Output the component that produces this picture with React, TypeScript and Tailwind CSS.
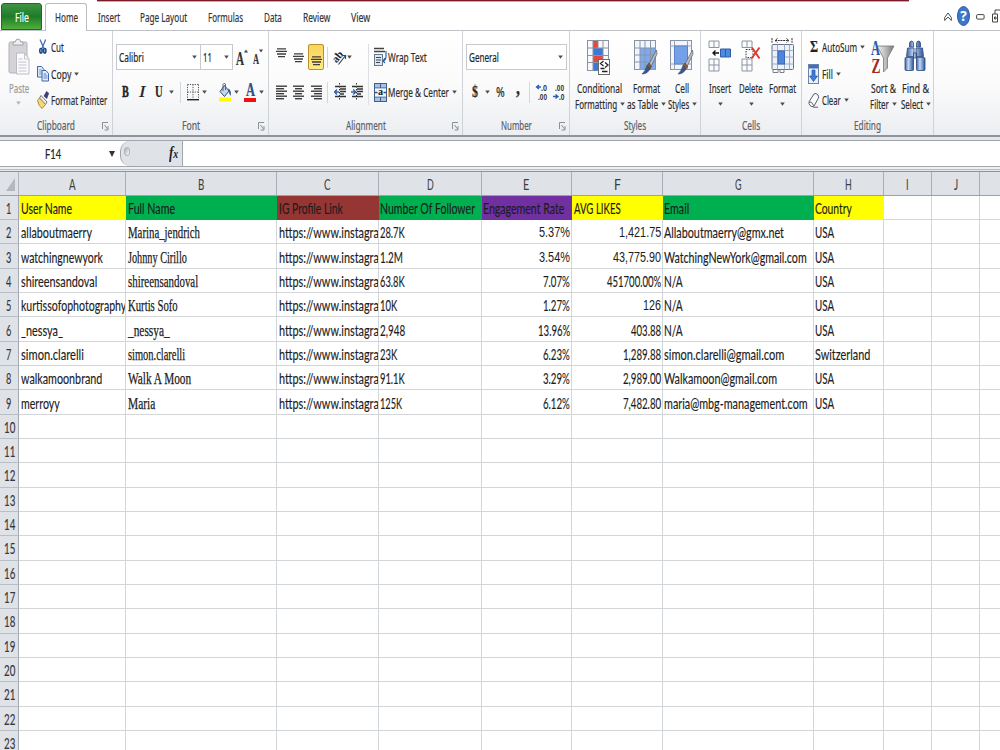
import React, { useLayoutEffect, useRef, useState } from "react";

/* Text squeezed or stretched horizontally so that it fills `w` pixels. */
function Fit({ w, className = "", children }: { w: number; className?: string; children: React.ReactNode }) {
  const ref = useRef<HTMLSpanElement>(null);
  const [scale, setScale] = useState(1);
  useLayoutEffect(() => {
    if (ref.current) setScale(w / ref.current.offsetWidth);
  }, [w]);
  return (
    <span className={"block shrink-0 whitespace-nowrap " + className} style={{ width: w }}>
      <span ref={ref} className="inline-block origin-left" style={{ transform: `scaleX(${scale})` }}>
        {children}
      </span>
    </span>
  );
}

const Arrow = ({ className = "", faded = false }: { className?: string; faded?: boolean }) => (
  <svg className={"block shrink-0 " + className} width="5" height="4" viewBox="0 0 5 4">
    <path d="M0.2 0.4h4.6L2.5 3.8z" fill={faded ? "#b3b3b3" : "#4d4d4d"} />
  </svg>
);

const Sep = ({ className = "" }: { className?: string }) => (
  <div className={"h-[21px] w-px shrink-0 bg-[#d3d6da] " + className} />
);

const Launcher = () => (
  <svg width="7" height="9" viewBox="0 0 7 9" fill="none" stroke="#8b9097">
    <path d="M0.5 7V0.5H6M2.5 3l3 4M6 4v4H2.5" />
  </svg>
);

function Group({ className, label, labelW, launcher, children }: {
  className: string; label: string; labelW: number; launcher?: boolean; children: React.ReactNode;
}) {
  return (
    <section className={"flex shrink-0 flex-col border-r border-[#cfd3d8] " + className}>
      <div className="h-[86px]">{children}</div>
      <div className="flex h-[18px] items-center">
        <div className="w-2.5" />
        <div className="flex flex-1 justify-center">
          <Fit w={labelW} className="text-[12.5px] leading-[18px] text-[#5a6068]">{label}</Fit>
        </div>
        <div className="w-2.5">{launcher && <Launcher />}</div>
      </div>
    </section>
  );
}

const lineSets: Record<string, number[][]> = {
  left: [[0, 11], [0, 8], [0, 11], [0, 8], [0, 11], [0, 8]],
  center: [[0, 11], [2, 9], [0, 11], [2, 9], [0, 11], [2, 9]],
  right: [[0, 11], [3, 11], [0, 11], [3, 11], [0, 11], [3, 11]],
};
const Lines = ({ kind, className = "" }: { kind: string; className?: string }) => (
  <svg className={"block shrink-0 " + className} width="11" height="15" viewBox="0 0 11 15">
    {lineSets[kind].map(([a, b], i) => (
      <rect key={i} x={a} y={0.5 + i * 2.5} width={b - a} height="1.4" fill="#3e3e3e" />
    ))}
  </svg>
);
const VLines = ({ className = "" }: { className?: string }) => (
  <svg className={"block shrink-0 " + className} width="11" height="10" viewBox="0 0 11 10">
    <path d="M1 0.8h9M0 3.4h11M1 6h9M2 8.7h7" stroke="#3e3e3e" strokeWidth="1.3" />
  </svg>
);
const Indent = ({ right = false, className = "" }: { right?: boolean; className?: string }) => (
  <svg className={"block shrink-0 " + className} width="13" height="18" viewBox="0 0 13 18">
    <path d="M1 3.5h11M6 6h6M6 8.5h6M6 11h4M1 13.5h11" stroke="#333" strokeWidth="1.7" />
    <path d="M5.5 0v18" stroke="#333" strokeDasharray="1.5 1.5" />
    {right ? <path d="M0 9h4M2.2 6.6L4.8 9l-2.6 2.4" stroke="#3060b8" strokeWidth="1.4" fill="none" />
      : <path d="M1 9h4M3 6.6L0.6 9 3 11.4" stroke="#3060b8" strokeWidth="1.4" fill="none" />}
  </svg>
);

const PasteIcon = () => (
  <svg width="22" height="37" viewBox="0 0 22 37">
    <rect x="1" y="4" width="18" height="31" rx="1.5" fill="#d5d2d8" stroke="#b4b1b8" />
    <path d="M5 7V4h2.5a2.5 3 0 0 1 5 0H15v3z" fill="#f0eff2" stroke="#a4a1a8" />
    <path d="M8.500 15h8l4.500 6v15h-12.500z" fill="#fbfbfd" stroke="#bbb9c2" />
    <path d="M16.500 15v6h4.500M10.500 21h4M10.500 24h8M10.500 27h8M10.500 30h8M10.500 33h8" stroke="#c3c2cb" fill="none" />
  </svg>
);
const CutIcon = () => (
  <svg className="block shrink-0" width="8" height="16" viewBox="0 0 9 17" preserveAspectRatio="none" fill="none">
    <path d="M1.200 0.500L5.500 10M7.500 0.500L3.300 10" stroke="#4a74b8" strokeWidth="1.500" />
    <ellipse cx="2.200" cy="12.500" rx="1.300" ry="2.400" stroke="#1d4489" strokeWidth="1.800" />
    <ellipse cx="6.500" cy="12.500" rx="1.300" ry="2.400" stroke="#1d4489" strokeWidth="1.800" />
  </svg>
);
const CopyIcon = () => (
  <svg className="block shrink-0" width="12" height="17" viewBox="0 0 12 17" fill="#e0ebfb" stroke="#3e66a8">
    <path d="M0.500 1.500h4l2.500 3V12H0.500z" />
    <path d="M2 5h3M2 7h3M2 9h3" stroke="#7a9dd0" />
    <path d="M5 5.500h4l2.500 3V16H5z" />
    <path d="M6.500 9h3M6.500 11h4M6.500 13h4" stroke="#5a85c6" />
  </svg>
);
const PainterIcon = () => (
  <svg className="block shrink-0" width="12" height="18" viewBox="0 0 12 18">
    <path d="M7 5l2.500-4.500 2.200 1.700L9.800 7.500z" fill="#3b3f78" stroke="#2b2f60" strokeWidth=".6" />
    <path d="M4 4.500l6 6.500-1.500 2.500L2.500 7z" fill="#f0f0f0" stroke="#555" strokeWidth=".8" />
    <path d="M2.500 7L8.500 13.500l-3.500 4Q1.500 15 0.500 9.500z" fill="#f5d978" stroke="#a5852a" strokeWidth=".9" />
  </svg>
);
const BorderIcon = ({ className = "" }: { className?: string }) => (
  <svg className={"block shrink-0 " + className} width="12" height="17" viewBox="0 0 12 17" fill="none" stroke="#555">
    <path d="M0.500 0.500h11M0.500 8h11M0.500 0.500V15M6 0.500V15M11.500 0.500V15" strokeDasharray="1.200 1.200" />
    <path d="M0 15.700h12" stroke="#222" strokeWidth="1.400" />
  </svg>
);
const BucketIcon = ({ className = "" }: { className?: string }) => (
  <svg className={"block shrink-0 " + className} width="13" height="20" viewBox="0 0 13 20">
    <path d="M5.500 3.500l4.500 5.500-4.500 5.500L1 9.500z" fill="#c4d6ee" stroke="#33496e" />
    <path d="M4 9V2.500Q5.500-.5 6.500 2.500V8" fill="none" stroke="#55637a" />
    <path d="M9 6.500q3.500.5 2.800 7.500Q9.800 12.500 9.800 9z" fill="#2c5ca8" />
    <rect x="0" y="15.500" width="12" height="4" fill="#ff0" />
  </svg>
);
const Orientation = ({ className = "" }: { className?: string }) => (
  <svg className={"block shrink-0 overflow-visible " + className} width="13" height="17" viewBox="0 0 13 17">
    <path d="M4.500 15.500l7-9M8.500 6.500h3v3.500" stroke="#444" strokeWidth="1.200" fill="none" />
    <text x="-2" y="11" fontSize="11" fontFamily="Liberation Serif" fontWeight="bold" transform="rotate(-50 4 8)" fill="#222">ab</text>
  </svg>
);
const WrapIcon = () => (
  <svg className="block shrink-0" width="13" height="20" viewBox="0 0 13 20" fill="none">
    <path d="M0 1.500h10M0 4.500h11" stroke="#444" strokeWidth="1.500" />
    <rect x="0.500" y="7.500" width="8" height="11" fill="#dce6f4" stroke="#68788e" />
    <path d="M2 10.500h5M2 13h5M2 15.500h4" stroke="#444" />
    <path d="M12 4v5q0 4-2.500 5M11 11l-2 3 2 2" stroke="#315fae" strokeWidth="1.200" />
  </svg>
);
const MergeIcon = () => (
  <svg className="block shrink-0" width="13" height="19" viewBox="0 0 13 19">
    <rect x="0.500" y="0.500" width="12" height="18" fill="#a8c2e6" stroke="#3f5e8c" />
    <path d="M0.500 5h12M0.500 14h12M6.500 0v5M6.500 14v5" stroke="#3f5e8c" />
    <rect x="1" y="5.500" width="11" height="8" fill="#f2f6fc" />
    <path d="M1 9.500h2.500M12 9.500H9.500" stroke="#24509c" strokeWidth="1.600" />
    <text x="3.900" y="12.300" fontSize="10" fontFamily="Liberation Serif" fontWeight="bold" fill="#111">a</text>
  </svg>
);
const DecimalIcon = ({ less = false, className = "" }: { less?: boolean; className?: string }) => (
  <svg className={"block shrink-0 overflow-visible " + className} width="13" height="18" viewBox="0 0 13 18">
    <g fontFamily="Liberation Sans" fontWeight="bold" fontSize="9.500" fill="#333">
      <text x={less ? 2 : 5} y="8" textLength={less ? 9 : 6} lengthAdjust="spacingAndGlyphs">{less ? ".00" : ".0"}</text>
      <text x={less ? 6 : 2} y="17" textLength={less ? 5.5 : 9} lengthAdjust="spacingAndGlyphs">{less ? ".0" : ".00"}</text>
    </g>
    {less ? <path d="M0 13.500h4M2.500 11.500l2.500 2-2.500 2" stroke="#2c5cb4" strokeWidth="1.300" fill="none" />
      : <path d="M1 4h4M3 2L0.500 4 3 6" stroke="#2c5cb4" strokeWidth="1.300" fill="none" />}
  </svg>
);

const Brush = () => (
  <g>
    <path d="M22.500 10L15 24l1.800 3L23 14z" fill="#b9bec6" stroke="#5a5f68" strokeWidth=".7" />
    <path d="M15 23l2.500 3.500-1.500 2.500-3-3.500z" fill="#8a5a2c" stroke="#4c3420" strokeWidth=".5" />
    <path d="M13 25.500l3 3.500q-2.500 5-8 5 3-2.500 5-8.500z" fill="#33598f" stroke="#223b66" strokeWidth=".5" />
  </g>
);
const CondIcon = () => (
  <svg width="24" height="35" viewBox="0 0 24 35">
    <rect x="0.500" y="0.500" width="21" height="30" fill="#f6f9fd" stroke="#8a93a2" />
    <rect x="6" y="1" width="5" height="7" fill="#e2493c" />
    <rect x="6" y="8" width="10" height="7.500" fill="#3c78d8" />
    <rect x="6" y="15.500" width="10" height="7" fill="#e2493c" />
    <rect x="6" y="22.500" width="5" height="8" fill="#3c78d8" />
    <path d="M0 8h22M0 15.500h22M0 22.500h22M6 0v31M11 0v8M16 0v31" stroke="#8a93a2" fill="none" />
    <rect x="11.500" y="19.500" width="11" height="15" fill="#fff" stroke="#6b6b6b" />
    <path d="M16.500 21l-3 2.500 3 2.500M18 22.500l3 2.500-3 2.500M13.500 28.500h4M15 31.500h5.500" stroke="#222" strokeWidth="1.300" fill="none" />
  </svg>
);
const TableIcon = () => (
  <svg width="24" height="35" viewBox="0 0 24 35">
    <rect x="0.500" y="0.500" width="21" height="29" fill="#f2f6fc" stroke="#8a93a2" />
    <rect x="6" y="8" width="15" height="21.500" fill="#7fa9ea" />
    <path d="M0 8h22M0 15h22M0 22h22M6 0v30M11 0v30M16.500 0v30" stroke="#8795ac" fill="none" />
    <Brush />
  </svg>
);
const StylesIcon = () => (
  <svg width="24" height="35" viewBox="0 0 24 35">
    <rect x="0.500" y="0.500" width="21" height="29" fill="#f2f6fc" stroke="#8a93a2" />
    <path d="M0 6h22M0 24h22M4.500 0v30M17.500 0v30" stroke="#9aa3b2" fill="none" />
    <rect x="4.500" y="6" width="13" height="18" fill="#74a0e8" stroke="#5a83c8" />
    <Brush />
  </svg>
);
const InsertIcon = () => (
  <svg width="24" height="35" viewBox="0 0 24 35" fill="#fafbfd" stroke="#8d95a2">
    <path d="M1 1h10v6.500H1zM6 1v6.500M1 19h10v12H1zM1 25h10M6 19v12" />
    <path d="M12.500 9h10v8h-10zM17.500 9v8" fill="#4f8ae0" stroke="#2f5ea8" />
    <path d="M5 13h6M7.500 10.500L5 13l2.500 2.500" stroke="#111" strokeWidth="1.300" fill="none" />
  </svg>
);
const DeleteIcon = () => (
  <svg width="20" height="35" viewBox="0 0 20 35" fill="#fafbfd" stroke="#8d95a2">
    <path d="M1 1h10v6.500H1zM6 1v6.500M1 19h10v12H1zM1 25h10M6 19v12" />
    <path d="M5 9.500h7v8H5z" stroke="#333" strokeDasharray="1.500 1.200" />
    <path d="M11 7.500l7.500 11M18.500 7.500l-8 11" stroke="#dd3a2a" strokeWidth="1.900" />
  </svg>
);
const FormatIcon = () => (
  <svg width="24" height="36" viewBox="0 0 24 36" fill="none">
    <path d="M1 0v5M21 0v5M4 2.500h14M6.500 0.500L4 2.500l2.500 2M15.500 0.500l2.500 2-2.500 2" stroke="#333" strokeDasharray="2 .7" />
    <path d="M2 32v2.500h5V32M9 32v2.500h4V32" stroke="#777f8c" fill="#fff" />
    <rect x="1" y="6.500" width="21.500" height="25" rx="1" fill="#edf2fa" stroke="#66718a" />
    <path d="M1 12.500h21.500M1 26h21.500M6.500 6.500v25M13.500 6.500v25M18.500 6.500v25M1 19h21.500" stroke="#9fabc0" />
    <rect x="7" y="13" width="6.500" height="13" fill="#4f86dd" stroke="#3a68b4" />
  </svg>
);
const FillIcon = () => (
  <svg className="block shrink-0" width="11" height="20" viewBox="0 0 11 20">
    <rect x="0.500" y="0.500" width="10" height="19" fill="#e8f0fb" stroke="#6d84a8" />
    <rect x="1" y="1" width="9" height="3.500" fill="#3b6fc0" />
    <path d="M4 6h3v6h2.500L5.500 17.500 1.500 12H4z" fill="#3f7bd8" stroke="#24509c" strokeWidth=".7" />
  </svg>
);
const ClearIcon = () => (
  <svg className="block shrink-0" width="12" height="17" viewBox="0 0 12 17">
    <path d="M6 2Q8 .5 10 3q1 2 .2 3.500L6 14q-2 1.500-4-.5Q.3 11.500 1.200 9.500z" fill="#fbfbfd" stroke="#596070" />
    <path d="M1.200 10q2.500-1 4.500 3.500" fill="none" stroke="#596070" />
    <path d="M5 15.200h5" stroke="#596070" />
  </svg>
);
const SortIcon = () => (
  <svg className="overflow-visible" width="24" height="36" viewBox="0 0 24 36">
    <defs>
      <linearGradient id="funnel" x1="0" x2="1">
        <stop offset="0" stopColor="#f2f2f2" /><stop offset=".5" stopColor="#bdbdbd" /><stop offset="1" stopColor="#777" />
      </linearGradient>
    </defs>
    <path d="M6 7h17l-6.500 12v10l-4 4V19z" fill="url(#funnel)" stroke="#77777a" strokeWidth=".8" />
    <g fontFamily="Liberation Serif" fontWeight="bold">
      <text x="0" y="15.500" fontSize="20" fill="#2458a8" textLength="9" lengthAdjust="spacingAndGlyphs">A</text>
      <text x="0.500" y="33.500" fontSize="22" fill="#9c2b22" textLength="9" lengthAdjust="spacingAndGlyphs">Z</text>
    </g>
  </svg>
);
const FindIcon = () => (
  <svg width="22" height="33" viewBox="0 0 22 33">
    <defs>
      <linearGradient id="lens" x1="0" x2="1">
        <stop offset="0" stopColor="#3a64a4" /><stop offset=".4" stopColor="#c2d8f5" /><stop offset="1" stopColor="#2f5697" />
      </linearGradient>
    </defs>
    <g fill="url(#lens)" stroke="#2c4878" strokeWidth=".8">
      <path d="M5.500 4q0-3 2-3t2 3v3h-4zM12.500 4q0-3 2-3t2 3v3h-4z" />
      <path d="M3.500 8h6.500v8.500H2.500zM12 8h6.500l1 8.500H12z" />
      <rect x="9.500" y="13" width="3" height="5" />
      <rect x="1" y="17.500" width="8.500" height="13" rx="1" />
      <rect x="12.500" y="17.500" width="8.500" height="13" rx="1" />
    </g>
  </svg>
);

const tabs: [string, number, string][] = [
  ["Insert", 22, "ml-[11px]"], ["Page Layout", 47, "ml-5"], ["Formulas", 35, "ml-[21px]"],
  ["Data", 18, "ml-[21px]"], ["Review", 27, "ml-[21px]"], ["View", 19, "ml-[21px]"],
];

function TabStrip() {
  return (
    <div className="flex h-[31px] border-b border-[#bfc3c8] bg-white text-[13px] leading-[18px] text-[#333] [-webkit-text-stroke:0.2px]">
      <div className="ml-px mt-[3px] flex h-[27px] w-[41px] justify-center rounded-t-[3px] border border-[#1c6a25] bg-linear-to-b from-[#3f9443] via-[#1d7c27] to-[#4fae3c] pt-[4px] text-white">
        <Fit w={14}>File</Fit>
      </div>
      <div className="ml-[3px] mt-[3px] flex h-7 w-[42px] justify-center rounded-t-[3px] border border-b-0 border-[#b9bdc3] bg-white pt-[4px]">
        <Fit w={23}>Home</Fit>
      </div>
      <div className="flex flex-1 flex-col">
        <div className="ml-2.5 h-[2px] w-[812px] border-b border-[#cfa9ae] bg-[#7b1a28]" />
        <div className="flex pt-[6px]">
          {tabs.map(([t, w, ml]) => <Fit key={t} w={w} className={ml}>{t}</Fit>)}
          <div className="ml-auto flex h-4 items-center [-webkit-text-stroke:0]">
            <svg className="mt-px" width="8" height="10" viewBox="0 0 8 10" fill="none" stroke="#4a4a4a">
              <path d="M0.700 5.500L4 1l3.300 4.500v3L4 5 0.700 8.500z" />
            </svg>
            <svg className="ml-[5px]" width="13" height="20" viewBox="0 0 13 20">
              <ellipse cx="6.500" cy="10" rx="6" ry="9.500" fill="#3d76cd" stroke="#2a58a4" />
              <text x="3.300" y="15" fontSize="14" fontWeight="bold" fontFamily="Noto Sans" fill="#fff" textLength="6.500" lengthAdjust="spacingAndGlyphs">?</text>
            </svg>
            <svg className="ml-[6px] mt-[2px]" width="9" height="6" viewBox="0 0 9 6">
              <rect x="0.600" y="0.600" width="7.500" height="4.500" rx="1" fill="#fff" stroke="#444" />
            </svg>
            <svg className="ml-[7px]" width="8" height="14" viewBox="0 0 8 14" fill="#fff" stroke="#444">
              <path d="M3 5V1h6M0.500 5h5v8h-5zM2.500 8h1.500v2H2.500z" />
            </svg>
          </div>
        </div>
      </div>
    </div>
  );
}

function Big({ className, icon, children }: { className: string; icon: React.ReactNode; children: React.ReactNode }) {
  return (
    <div className={"flex shrink-0 flex-col items-center " + className}>
      <div className="h-[49px] pt-[9px]">{icon}</div>
      {children}
    </div>
  );
}
const Line = ({ w, arrow, children }: { w: number; arrow?: boolean; children: React.ReactNode }) => (
  <div className="flex h-4 items-center gap-[3px] leading-4">
    <Fit w={w}>{children}</Fit>
    {arrow && <Arrow className="-mr-px" />}
  </div>
);

function Ribbon() {
  return (
    <div className="flex h-[104px] bg-linear-to-b from-white via-[#fbfbfc] to-[#eceef1] text-[13px] leading-[18px] text-[#2c2c2c] [-webkit-text-stroke:0.2px]">
      <Group className="w-[113px]" label="Clipboard" labelW={38} launcher>
        <div className="flex">
          <div className="flex w-[37px] flex-col items-center text-[#9a9a9a]">
            <div className="h-[48px] pt-[7px]"><PasteIcon /></div>
            <Fit w={20}>Paste</Fit>
            <Arrow faded className="mt-1" />
          </div>
          <div className="flex flex-col pt-[3px]">
            <div className="flex h-[26.500px] items-center pl-[2px]"><CutIcon /><Fit w={13} className="ml-[4px]">Cut</Fit></div>
            <div className="flex h-[26.500px] items-center"><CopyIcon /><Fit w={20} className="ml-[2px]">Copy</Fit><Arrow className="ml-[3px]" /></div>
            <div className="flex h-[26.500px] items-center"><PainterIcon /><Fit w={56} className="ml-[2px]">Format Painter</Fit></div>
          </div>
        </div>
      </Group>

      <Group className="w-[156px]" label="Font" labelW={18} launcher>
        <div className="flex pl-[3px] pt-[13px]">
          <div className="flex h-[26px] w-[85px] items-center border border-[#c6c9ce] bg-white text-[#222]">
            <Fit w={25} className="ml-[2px]">Calibri</Fit><Arrow className="ml-auto mr-[3px]" />
          </div>
          <div className="flex h-[26px] w-8 items-center border border-l-0 border-[#c6c9ce] bg-white text-[#222]">
            <Fit w={9} className="ml-[2px]">11</Fit><Arrow className="ml-auto mr-[3px]" />
          </div>
          <div className="flex h-[26px] items-center font-['Liberation_Serif',serif] font-bold text-[#333]">
            <Fit w={8} className="ml-[3px] pt-1 text-[18px]">A</Fit>
            <svg className="mb-3" width="4" height="4" viewBox="0 0 4 4"><path d="M0 3.500h4L2 .5z" fill="#444" /></svg>
            <Fit w={6} className="ml-[5px] pt-1.5 text-[14px]">A</Fit>
            <svg className="mb-3" width="4" height="4" viewBox="0 0 4 4"><path d="M0 .5h4L2 3.500z" fill="#444" /></svg>
          </div>
        </div>
        <div className="mt-[9px] flex h-[26px] items-center font-['Liberation_Serif',serif] text-[16px] font-bold text-[#222]">
          <Fit w={7} className="ml-[9px] [-webkit-text-stroke:0.5px]">B</Fit>
          <Fit w={6} className="ml-[10px] font-normal italic">I</Fit>
          <Fit w={8} className="ml-[10px] underline">U</Fit>
          <Arrow className="ml-[6px]" />
          <Sep className="ml-[6px]" />
          <BorderIcon className="ml-[6px]" />
          <Arrow className="ml-[3px]" />
          <BucketIcon className="ml-[12px]" />
          <Arrow className="ml-[2px]" />
          <div className="ml-[5px] flex h-5 w-[12px] flex-col items-center">
            <Fit w={9} className="h-4 text-[18px] leading-[16px] text-[#2d4f8c]">A</Fit>
            <div className="h-1 w-full bg-[#ee1111]" />
          </div>
          <Arrow className="ml-[3px]" />
        </div>
      </Group>

      <Group className="w-[194px]" label="Alignment" labelW={40} launcher>
        <div className="flex">
          <div>
            <div className="mt-[13px] flex h-[26px] items-center">
              <VLines className="mb-2 ml-[7px]" />
              <VLines className="ml-[6px] mt-px" />
              <div className="ml-[4px] flex h-[26px] w-4 items-end justify-center rounded-[2px] border border-[#b8912c] bg-linear-to-b from-[#fbd35c] to-[#ffea82] pb-[3px]"><VLines /></div>
              <Sep className="ml-[3px]" />
              <Orientation className="ml-[6px]" />
              <Arrow className="ml-[0px]" />
            </div>
            <div className="mt-[9px] flex h-[26px] items-center">
              <Lines kind="left" className="ml-[7px]" />
              <Lines kind="center" className="ml-[6px]" />
              <Lines kind="right" className="ml-[7px]" />
              <Sep className="ml-[5px]" />
              <Indent className="ml-[6px]" />
              <Indent right className="ml-[4px]" />
            </div>
          </div>
          <div className="ml-[4px] mt-[13px] h-[61px] w-px bg-[#dcdfe3]" />
          <div className="pl-[5px] pt-[13px]">
            <div className="flex h-[26px] items-center"><WrapIcon /><Fit w={39} className="ml-px">Wrap Text</Fit></div>
            <div className="mt-[9px] flex h-[26px] items-center"><MergeIcon /><Fit w={61} className="ml-px">Merge &amp; Center</Fit><Arrow className="ml-[3px]" /></div>
          </div>
        </div>
      </Group>

      <Group className="w-[107px]" label="Number" labelW={31} launcher>
        <div className="ml-[3px] mt-[13px] flex h-[26px] w-[101px] items-center border border-[#c6c9ce] bg-white text-[#222]">
          <Fit w={30} className="ml-[2px]">General</Fit><Arrow className="ml-auto mr-[3px]" />
        </div>
        <div className="mt-[9px] flex h-[26px] items-center font-bold">
          <Fit w={6} className="ml-[9px] font-['Liberation_Serif',serif] text-[16px]">$</Fit>
          <Arrow className="ml-[7px]" />
          <Fit w={9} className="ml-[6px] text-[14px] font-normal">%</Fit>
          <Fit w={4} className="-mt-2.5 ml-[11px] font-['Liberation_Serif',serif] text-[20px]">,</Fit>
          <Sep className="ml-[9px]" />
          <DecimalIcon className="ml-[6px]" />
          <DecimalIcon less className="ml-[4px]" />
        </div>
      </Group>

      <Group className="w-[131px]" label="Styles" labelW={22}>
        <div className="flex">
          <Big className="ml-[5px] w-12" icon={<CondIcon />}>
            <Line w={45}>Conditional</Line><Line w={42} arrow>Formatting</Line>
          </Big>
          <Big className="ml-[3px] w-[40px]" icon={<TableIcon />}>
            <Line w={27}>Format</Line><Line w={31} arrow>as Table</Line>
          </Big>
          <Big className="ml-px w-[30px]" icon={<StylesIcon />}>
            <Line w={14}>Cell</Line><Line w={21} arrow>Styles</Line>
          </Big>
        </div>
      </Group>

      <Group className="w-[101px]" label="Cells" labelW={18}>
        <div className="flex">
          <Big className="ml-[4px] w-[30px]" icon={<InsertIcon />}>
            <Line w={22}>Insert</Line><Arrow className="mt-[6px]" />
          </Big>
          <Big className="ml-[2px] w-[28px]" icon={<DeleteIcon />}>
            <Line w={24}>Delete</Line><Arrow className="mt-[6px]" />
          </Big>
          <Big className="ml-[2px] w-[31px]" icon={<div className="-mt-[2px]"><FormatIcon /></div>}>
            <Line w={27}>Format</Line><Arrow className="mt-[6px]" />
          </Big>
        </div>
      </Group>

      <Group className="w-[132px]" label="Editing" labelW={27}>
        <div className="flex">
          <div className="w-[64px] pt-[3px]">
            <div className="flex h-[26.500px] items-center"><Fit w={8} className="ml-[8px] font-['Liberation_Serif',serif] text-[17px] font-bold text-[#222]">Σ</Fit><Fit w={35} className="ml-[4px]">AutoSum</Fit><Arrow className="ml-[3px]" /></div>
            <div className="flex h-[26.500px] items-center pl-[6px]"><FillIcon /><Fit w={11} className="ml-[3px]">Fill</Fit><Arrow className="ml-[3px]" /></div>
            <div className="flex h-[26.500px] items-center pl-[6px]"><ClearIcon /><Fit w={19} className="ml-[2px]">Clear</Fit><Arrow className="ml-[3px]" /></div>
          </div>
          <Big className="ml-[3px] w-[28px]" icon={<div className="-mt-px"><SortIcon /></div>}>
            <Line w={25}>Sort &amp;</Line><Line w={19} arrow>Filter</Line>
          </Big>
          <Big className="ml-[3px] w-[30px]" icon={<FindIcon />}>
            <Line w={27}>Find &amp;</Line><Line w={22} arrow>Select</Line>
          </Big>
        </div>
      </Group>
    </div>
  );
}

function FormulaBar() {
  return (
    <div className="h-[36px] border-t-2 border-[#8f949b] bg-[#e3e6ea] pt-[3px]">
      <div className="flex h-[27px] border-y border-[#a2a6ac] bg-[#dfe2e7]">
        <div className="flex w-[120px] items-center bg-white text-[14px] text-[#222] [-webkit-text-stroke:0.2px]">
          <Fit w={16} className="ml-[45px] font-['Lato',sans-serif]">F14</Fit>
          <svg className="ml-auto mr-[5px]" width="6" height="6" viewBox="0 0 6 6"><path d="M0 0h6L3 6z" fill="#333" /></svg>
        </div>
        <div className="flex w-[63px] bg-white">
          <div className="flex flex-1 items-center rounded-l-[10px] border-l border-r border-[#a2a6ac] bg-[#dfe2e7]">
            <div className="mb-1 ml-[3px] h-[9px] w-[6px] rounded-full border border-[#b0b4ba] bg-linear-to-br from-[#a8acb2] to-white" />
            <Fit w={9} className="ml-auto mr-[4px] font-['Liberation_Serif',serif] text-[16px] font-bold italic leading-5 text-[#222]">f<span className="text-[12px]">x</span></Fit>
          </div>
        </div>
        <div className="flex-1 bg-white" />
      </div>
      <div className="h-[2px] bg-[#eef0f3]" />
      <div className="h-px bg-[#b9bdc3]" />
    </div>
  );
}

const colW = ["w-[107px]", "w-[151px]", "w-[102px]", "w-[103px]", "w-[90px]", "w-[91px]", "w-[151px]", "w-[70px]", "w-[48px]", "w-12", "w-5"];
const letters = ["A", "B", "C", "D", "E", "F", "G", "H", "I", "J", ""];
const headBg = ["bg-[#ffff00]", "bg-[#00b050]", "bg-[#963634]", "bg-[#00b050]", "bg-[#7030a0]", "bg-[#ffff00]", "bg-[#00b050]", "bg-[#ffff00]"];

type Cell = [string, number];
const url: Cell = ["https://www.instagra", 100];
const usa: Cell = ["USA", 19];
const rows: Cell[][] = [
  [["User Name", 51], ["Full Name", 47], ["IG Profile Link", 64], ["Number Of Follower", 95], ["Engagement Rate", 81], ["AVG LIKES", 47], ["Email", 25], ["Country", 37]],
  [["allaboutmaerry", 71], ["Marina_jendrich", 72], url, ["28.7K", 25], ["5.37%", 31], ["1,421.75", 42], ["Allaboutmaerry@gmx.net", 120], usa],
  [["watchingnewyork", 82], ["Johnny Cirillo", 59], url, ["1.2M", 23], ["3.54%", 31], ["43,775.90", 48], ["WatchingNewYork@gmail.com", 143], usa],
  [["shireensandoval", 76], ["shireensandoval", 70], url, ["63.8K", 25], ["7.07%", 27], ["451700.00%", 54], ["N/A", 19], usa],
  [["kurtissofophotography", 105], ["Kurtis Sofo", 50], url, ["10K", 17], ["1.27%", 27], ["126", 18], ["N/A", 19], usa],
  [["_nessya_", 42], ["_nessya_", 42], url, ["2,948", 25], ["13.96%", 32], ["403.88", 30], ["N/A", 19], usa],
  [["simon.clarelli", 63], ["simon.clarelli", 57], url, ["23K", 17], ["6.23%", 27], ["1,289.88", 38], ["simon.clarelli@gmail.com", 120], ["Switzerland", 55]],
  [["walkamoonbrand", 81], ["Walk A Moon", 63], url, ["91.1K", 25], ["3.29%", 27], ["2,989.00", 38], ["Walkamoon@gmail.com", 113], usa],
  [["merroyy", 39], ["Maria", 27], url, ["125K", 22], ["6.12%", 27], ["7,482.80", 38], ["maria@mbg-management.com", 144], usa],
];
/* Numbers entered in a sans-serif face instead of the sheet's default. */
const plain = new Set(["5.37%", "3.54%", "1,421.75", "43,775.90", "126"]);

function Sheet() {
  return (
    <div className="flex w-[1000px] flex-col overflow-hidden bg-white font-['Lato',sans-serif] text-[15px] leading-[20px] text-[#1c1c1c]">
      <div className="flex h-[25px] shrink-0 border-b border-t border-b-[#9da1a8] border-t-[#8f949b] bg-[#dfe2e7] text-[#3a3d42]">
        <div className="flex w-[19px] items-end justify-end border-r border-[#b1b5bc] pb-1 pr-[3px]">
          <svg width="9" height="13" viewBox="0 0 9 13"><path d="M9 0v13H0z" fill="#b4b8be" /></svg>
        </div>
        {letters.map((l, i) => (
          <div key={i} className={"flex items-center justify-center border-[#a9adb4] pt-px " + (l ? "border-r " : "") + colW[i]}>
            {l && <Fit w={l === "I" ? 2.5 : l === "J" ? 4 : 6.5}>{l}</Fit>}
          </div>
        ))}
      </div>
      {Array.from({ length: 23 }, (_, r) => (
        <div key={r} className="flex h-[24.330px] shrink-0">
          <div className="flex w-[19px] shrink-0 items-center justify-center border-b border-r border-b-[#b9bdc4] border-r-[#a3a8b0] bg-[#dfe2e7] pt-px text-[#33363b] [-webkit-text-stroke:0.15px]">
            <Fit w={r < 9 ? 5.5 : 11}>{r + 1}</Fit>
          </div>
          {letters.map((l, c) => {
            const cell = rows[r]?.[c];
            const head = r === 0 && c < 8;
            const right = r > 0 && (c === 4 || c === 5);
            return (
              <div key={c} className={[
                "flex shrink-0 items-center overflow-hidden",
                c === 1 && r > 0 ? "pt-[3px]" : "pt-px",
                colW[c],
                head ? headBg[c] : l ? "border-b border-r border-[#d3d6d9]" : "border-b border-[#d3d6d9]",
                right ? "justify-end pr-px" : c > 2 && c !== 5 ? "pl-px" : "pl-[2px]",
              ].join(" ")}>
                {cell && (
                  <Fit w={cell[1]} className={
                    c === 1 && r > 0 ? "font-['Liberation_Serif',serif] text-[16.500px] [-webkit-text-stroke:0.25px]"
                      : plain.has(cell[0]) ? "font-['Liberation_Sans',sans-serif] text-[15.500px]" : "[-webkit-text-stroke:0.15px]"
                  }>{cell[0]}</Fit>
                )}
              </div>
            );
          })}
        </div>
      ))}
    </div>
  );
}

export default function App() {
  return (
    <div className="flex h-[750px] w-[1000px] flex-col overflow-hidden bg-white font-['Noto_Sans',sans-serif]">
      <TabStrip />
      <Ribbon />
      <FormulaBar />
      <Sheet />
    </div>
  );
}
